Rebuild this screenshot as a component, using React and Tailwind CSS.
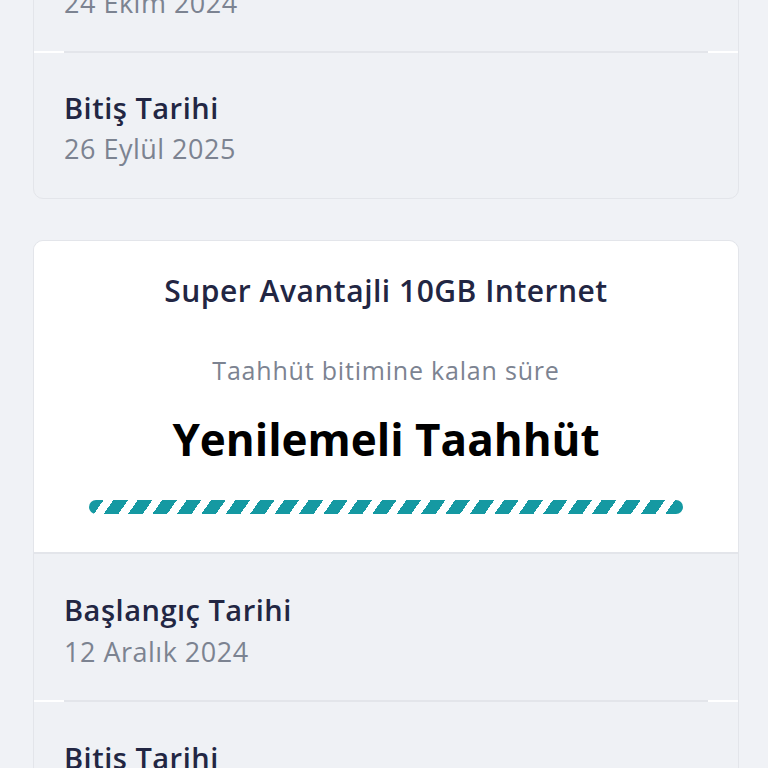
import React from "react";

const font = { fontFamily: "'Open Sans', 'Noto Sans', sans-serif" };

function Divider() {
  return (
    <div className="h-[2px] bg-white">
      <div className="mx-[30px] h-full bg-[#e3e5ea]" />
    </div>
  );
}

function Row({ title, date }) {
  return (
    <div className="px-[30px] pt-[38px] pb-[31px]">
      <div className="text-[29px] leading-[36px] font-semibold tracking-[0.5px] text-[#222643]">{title}</div>
      <div className="mt-[7px] text-[27px] leading-[34px] tracking-[0.5px] text-[#7c8391]">{date}</div>
    </div>
  );
}

export default function App() {
  return (
    <div className="min-h-screen bg-[#f0f2f6] overflow-hidden" style={font}>
      <div className="ml-[33px] w-[706px] -mt-[96px] flex flex-col gap-[41px]">
        <div className="rounded-[10px] border border-[#e3e5ea] bg-[#eff1f5] overflow-hidden">
          <Row title="Başlangıç Tarihi" date="24 Ekim 2024" />
          <Divider />
          <div className="px-[30px] pt-[37px] pb-[32px]">
            <div className="text-[29px] leading-[36px] font-semibold tracking-[0.5px] text-[#222643]">Bitiş Tarihi</div>
            <div className="mt-[6px] text-[27px] leading-[34px] tracking-[0.5px] text-[#7c8391]">26 Eylül 2025</div>
          </div>
        </div>
        <div className="rounded-[10px] border border-[#e3e5ea] bg-[#eff1f5] overflow-hidden">
          <div className="bg-white flex flex-col items-center pt-[30px] pb-[38px] border-b-2 border-[#e3e5ea]">
            <div className="text-[30px] leading-[40px] font-semibold tracking-[0.5px] text-[#222643]">Super Avantajli 10GB Internet</div>
            <div className="mt-[42px] text-[25px] leading-[34px] tracking-[0.8px] text-[#7c8391]">Taahhüt bitimine kalan süre</div>
            <div className="mt-[22px] text-[44px] leading-[60px] font-bold text-black">Yenilemeli Taahhüt</div>
            <div className="mt-[31px] w-[594px] h-[14px] rounded-full bg-[repeating-linear-gradient(125deg,#1599a2_0px,#1599a2_12px,transparent_12px,transparent_20px)]" />
          </div>
          <Row title="Başlangıç Tarihi" date="12 Aralık 2024" />
          <Divider />
          <Row title="Bitiş Tarihi" date="26 Eylül 2025" />
        </div>
      </div>
    </div>
  );
}
